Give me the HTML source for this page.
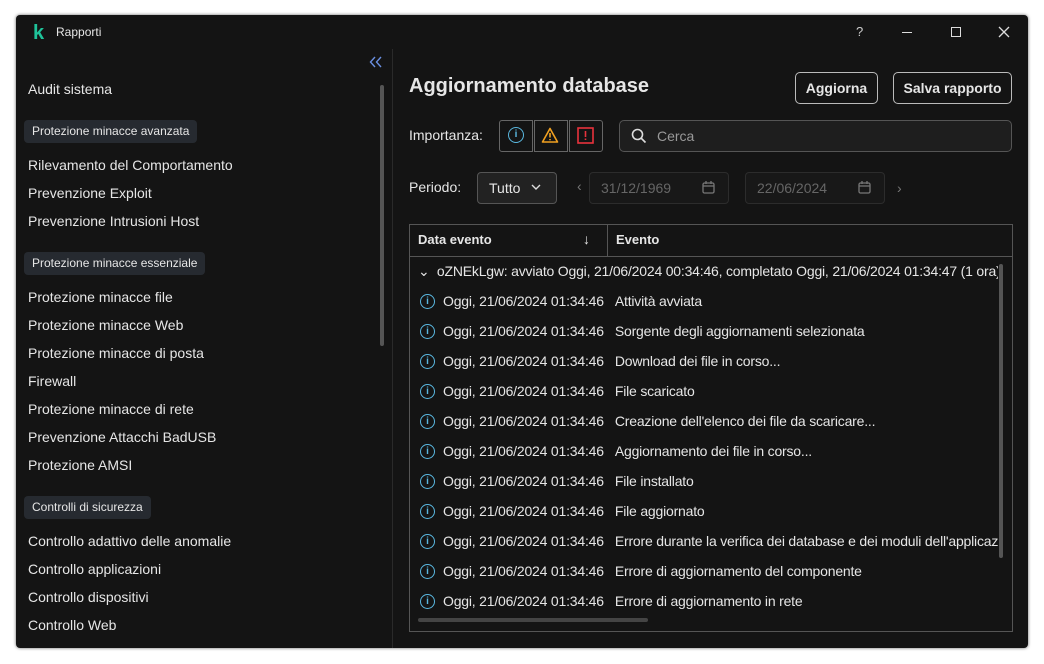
<!DOCTYPE html><html><head><style>
body{margin:0;width:1044px;height:664px;background:#fff;font-family:"Liberation Sans",sans-serif;color:#e6e6e6;position:relative;overflow:hidden}
.win{position:absolute;left:16px;top:15px;width:1012px;height:633px;background:#141414;border-radius:4px;box-shadow:0 0 3px rgba(0,0,0,.6)}
.a{position:absolute;white-space:nowrap}
.side div.i{position:absolute;left:12px;font-size:14px}
.tag{position:absolute;left:8px;background:#262a30;border-radius:4px;font-size:12px;padding:0 8px;height:23px;line-height:23px}
.btn{position:absolute;border:1px solid #bbb;border-radius:5px;font-weight:bold;font-size:14px;text-align:center;box-sizing:border-box}
.row{position:absolute;left:420px;font-size:14px;height:30px;line-height:30px;white-space:nowrap;letter-spacing:-0.2px}
.ic{display:inline-block;width:13px;height:13px;border:1.6px solid #5ab8e0;border-radius:50%;vertical-align:middle;margin-right:8px;position:relative;top:-1px;text-align:center;font-size:10px;line-height:13px;color:#5ab8e0;font-weight:bold;letter-spacing:0}
</style></head><body>
<div class="win">
<div class="a" style="left:17px;top:7px;color:#1fc39a;font-weight:bold;font-size:20px">k</div>
<div class="a" style="left:40px;top:10px;font-size:12px">Rapporti</div>
<div class="a" style="left:840px;top:9px;font-size:13px;color:#ccc">?</div>
<div class="a" style="left:886px;top:17px;width:10px;height:1px;background:#ddd"></div>
<div class="a" style="left:935px;top:12px;width:8px;height:8px;border:1.3px solid #ddd"></div>
<svg class="a" style="left:982px;top:11px" width="12" height="12"><path d="M1 1l10 10M11 1L1 11" stroke="#ddd" stroke-width="1.3"/></svg>
<svg class="a" style="left:353px;top:41px" width="14" height="12"><path d="M6 1L1.5 6 6 11M12 1L7.5 6 12 11" fill="none" stroke="#6a8fe0" stroke-width="1.4"/></svg>
<div class="a" style="left:376px;top:34px;width:1px;height:599px;background:#2a2a2a"></div>
<div class="a" style="left:364px;top:70px;width:4px;height:261px;background:#555;border-radius:2px"></div>
<div class="side">
<div class="i" style="top:66px">Audit sistema</div>
<div class="tag" style="top:105px">Protezione minacce avanzata</div>
<div class="i" style="top:142px">Rilevamento del Comportamento</div>
<div class="i" style="top:170px">Prevenzione Exploit</div>
<div class="i" style="top:198px">Prevenzione Intrusioni Host</div>
<div class="tag" style="top:237px">Protezione minacce essenziale</div>
<div class="i" style="top:274px">Protezione minacce file</div>
<div class="i" style="top:302px">Protezione minacce Web</div>
<div class="i" style="top:330px">Protezione minacce di posta</div>
<div class="i" style="top:358px">Firewall</div>
<div class="i" style="top:386px">Protezione minacce di rete</div>
<div class="i" style="top:414px">Prevenzione Attacchi BadUSB</div>
<div class="i" style="top:442px">Protezione AMSI</div>
<div class="tag" style="top:481px">Controlli di sicurezza</div>
<div class="i" style="top:518px">Controllo adattivo delle anomalie</div>
<div class="i" style="top:546px">Controllo applicazioni</div>
<div class="i" style="top:574px">Controllo dispositivi</div>
<div class="i" style="top:602px">Controllo Web</div>
</div>
</div>
<div class="a" style="left:409px;top:75px;font-size:20px;font-weight:bold">Aggiornamento database</div>
<div class="btn" style="left:795px;top:72px;width:83px;height:32px;line-height:30px">Aggiorna</div>
<div class="btn" style="left:893px;top:72px;width:119px;height:32px;line-height:30px">Salva rapporto</div>
<div class="a" style="left:409px;top:127px;font-size:14px">Importanza:</div>
<div class="a" style="left:499px;top:120px;width:32px;height:30px;border:1px solid #666;border-radius:3px 0 0 3px"></div>
<div class="a" style="left:534px;top:120px;width:32px;height:30px;border:1px solid #666"></div>
<div class="a" style="left:569px;top:120px;width:32px;height:30px;border:1px solid #666;border-radius:0 3px 3px 0"></div>
<div class="a" style="left:508px;top:127px"><span class="ic" style="width:14px;height:14px;line-height:14px">i</span></div>
<svg class="a" style="left:541px;top:127px" width="18" height="16"><path d="M9 1.5L16.5 15H1.5Z" fill="none" stroke="#f0a020" stroke-width="1.6" stroke-linejoin="round"/><path d="M9 6v4.5M9 12v1.2" stroke="#f0a020" stroke-width="1.6"/></svg>
<svg class="a" style="left:577px;top:127px" width="17" height="17"><rect x="1" y="1" width="15" height="15" fill="none" stroke="#e8323c" stroke-width="1.6"/><path d="M8.5 4v6M8.5 11.5v1.5" stroke="#e8323c" stroke-width="1.6"/></svg>
<div class="a" style="left:619px;top:120px;width:391px;height:30px;border:1px solid #555;border-radius:5px;background:#1e1e1e"></div>
<svg class="a" style="left:631px;top:128px" width="16" height="16"><circle cx="6.5" cy="6.5" r="5" fill="none" stroke="#ddd" stroke-width="1.6"/><path d="M10 10l4.5 4.5" stroke="#ddd" stroke-width="1.6"/></svg>
<div class="a" style="left:657px;top:128px;font-size:14px;color:#999">Cerca</div>
<div class="a" style="left:409px;top:179px;font-size:14px">Periodo:</div>
<div class="a" style="left:477px;top:172px;width:78px;height:30px;border:1px solid #555;border-radius:4px;background:#222"></div>
<div class="a" style="left:489px;top:180px;font-size:14px">Tutto</div>
<svg class="a" style="left:530px;top:183px" width="12" height="8"><path d="M2 2l4 4 4-4" fill="none" stroke="#ddd" stroke-width="1.4"/></svg>
<div class="a" style="left:577px;top:178px;color:#777;font-size:14px">‹</div>
<div class="a" style="left:589px;top:172px;width:138px;height:30px;border:1px solid #2c2c2c;border-radius:4px;background:#181818"></div>
<div class="a" style="left:601px;top:180px;font-size:14px;color:#666">31/12/1969</div>
<div class="a" style="left:745px;top:172px;width:138px;height:30px;border:1px solid #2c2c2c;border-radius:4px;background:#181818"></div>
<div class="a" style="left:757px;top:180px;font-size:14px;color:#666">22/06/2024</div>
<svg class="a" style="left:702px;top:181px" width="13" height="13"><rect x="1" y="2" width="11" height="10" rx="1.5" fill="none" stroke="#777" stroke-width="1.3"/><path d="M1 5h11M4 0v3M9 0v3" stroke="#777" stroke-width="1.3"/></svg>
<svg class="a" style="left:858px;top:181px" width="13" height="13"><rect x="1" y="2" width="11" height="10" rx="1.5" fill="none" stroke="#777" stroke-width="1.3"/><path d="M1 5h11M4 0v3M9 0v3" stroke="#777" stroke-width="1.3"/></svg>
<div class="a" style="left:897px;top:180px;color:#777;font-size:14px">›</div>
<div class="a" style="left:409px;top:224px;width:602px;height:406px;border:1px solid #555"></div>
<div class="a" style="left:410px;top:256px;width:602px;height:1px;background:#555"></div>
<div class="a" style="left:607px;top:225px;width:1px;height:31px;background:#555"></div>
<div class="a" style="left:418px;top:232px;font-size:13px;font-weight:bold">Data evento</div>
<div class="a" style="left:583px;top:231px;font-size:14px">↓</div>
<div class="a" style="left:616px;top:232px;font-size:13px;font-weight:bold">Evento</div>
<div class="a" style="left:999px;top:264px;width:4px;height:294px;background:#555;border-radius:2px"></div>
<div class="a" style="left:418px;top:618px;width:230px;height:4px;background:#444;border-radius:2px"></div>
<div style="position:absolute;left:410px;top:257px;width:588px;height:360px;overflow:hidden">
<div class="row" style="left:8px;top:0;height:28px;line-height:28px">⌄&nbsp;&nbsp;oZNEkLgw: avviato Oggi, 21/06/2024 00:34:46, completato Oggi, 21/06/2024 01:34:47 (1 ora)</div>
<div class="row" style="left:10px;top:29px"><span class="ic">i</span>Oggi, 21/06/2024 01:34:46&nbsp;&nbsp;&nbsp;Attività avviata</div>
<div class="row" style="left:10px;top:59px"><span class="ic">i</span>Oggi, 21/06/2024 01:34:46&nbsp;&nbsp;&nbsp;Sorgente degli aggiornamenti selezionata</div>
<div class="row" style="left:10px;top:89px"><span class="ic">i</span>Oggi, 21/06/2024 01:34:46&nbsp;&nbsp;&nbsp;Download dei file in corso...</div>
<div class="row" style="left:10px;top:119px"><span class="ic">i</span>Oggi, 21/06/2024 01:34:46&nbsp;&nbsp;&nbsp;File scaricato</div>
<div class="row" style="left:10px;top:149px"><span class="ic">i</span>Oggi, 21/06/2024 01:34:46&nbsp;&nbsp;&nbsp;Creazione dell'elenco dei file da scaricare...</div>
<div class="row" style="left:10px;top:179px"><span class="ic">i</span>Oggi, 21/06/2024 01:34:46&nbsp;&nbsp;&nbsp;Aggiornamento dei file in corso...</div>
<div class="row" style="left:10px;top:209px"><span class="ic">i</span>Oggi, 21/06/2024 01:34:46&nbsp;&nbsp;&nbsp;File installato</div>
<div class="row" style="left:10px;top:239px"><span class="ic">i</span>Oggi, 21/06/2024 01:34:46&nbsp;&nbsp;&nbsp;File aggiornato</div>
<div class="row" style="left:10px;top:269px"><span class="ic">i</span>Oggi, 21/06/2024 01:34:46&nbsp;&nbsp;&nbsp;Errore durante la verifica dei database e dei moduli dell'applicazione</div>
<div class="row" style="left:10px;top:299px"><span class="ic">i</span>Oggi, 21/06/2024 01:34:46&nbsp;&nbsp;&nbsp;Errore di aggiornamento del componente</div>
<div class="row" style="left:10px;top:329px"><span class="ic">i</span>Oggi, 21/06/2024 01:34:46&nbsp;&nbsp;&nbsp;Errore di aggiornamento in rete</div>
</div>
</body></html>
